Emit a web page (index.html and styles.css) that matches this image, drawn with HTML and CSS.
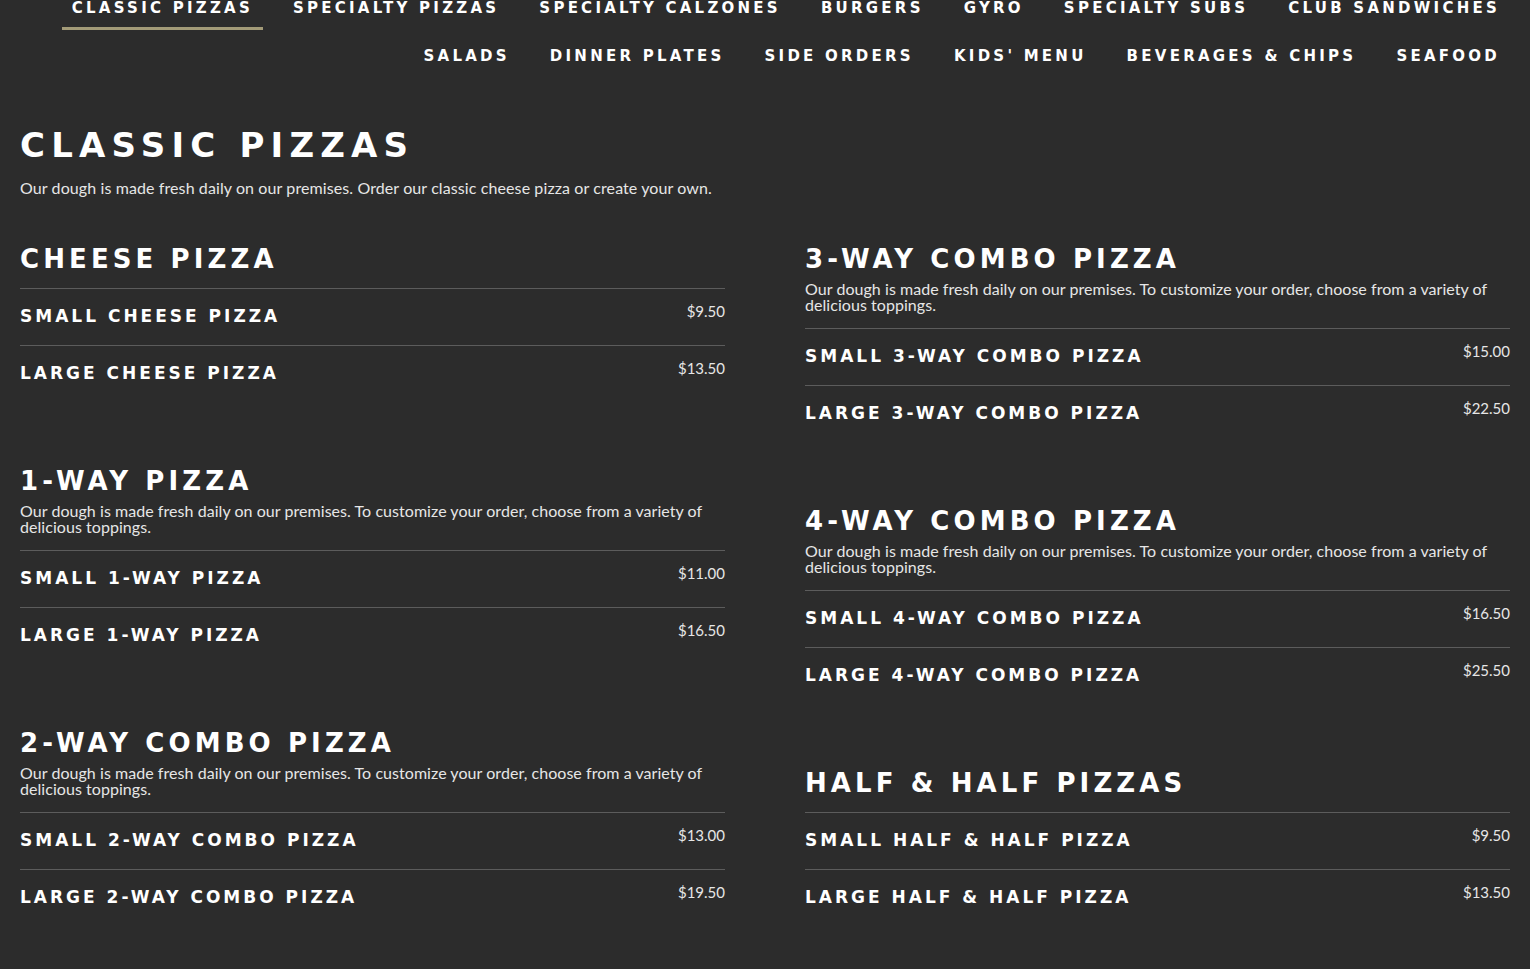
FILE: index.html
```html
<!DOCTYPE html>
<html lang="en">
<head>
<meta charset="utf-8">
<title>Classic Pizzas</title>
<link rel="stylesheet" href="styles.css">
</head>
<body>
<nav class="nav">
  <ul class="nav-row">
    <li class="nav-item active">Classic Pizzas</li>
    <li class="nav-item">Specialty Pizzas</li>
    <li class="nav-item">Specialty Calzones</li>
    <li class="nav-item">Burgers</li>
    <li class="nav-item">Gyro</li>
    <li class="nav-item">Specialty Subs</li>
    <li class="nav-item">Club Sandwiches</li>
  </ul>
  <ul class="nav-row">
    <li class="nav-item">Salads</li>
    <li class="nav-item">Dinner Plates</li>
    <li class="nav-item">Side Orders</li>
    <li class="nav-item">Kids' Menu</li>
    <li class="nav-item">Beverages &amp; Chips</li>
    <li class="nav-item">Seafood</li>
  </ul>
</nav>

<main class="menu">
  <h1 class="menu-title">Classic Pizzas</h1>
  <p class="menu-intro">Our dough is made fresh daily on our premises. Order our classic cheese pizza or create your own.</p>

  <div class="columns">
    <div class="column">
      <section class="section">
        <h2 class="section-title">Cheese Pizza</h2>
        <ul class="items">
          <li class="item"><span class="item-name">Small Cheese Pizza</span><span class="price">$9.50</span></li>
          <li class="item"><span class="item-name">Large Cheese Pizza</span><span class="price">$13.50</span></li>
        </ul>
      </section>
      <section class="section">
        <h2 class="section-title">1-Way Pizza</h2>
        <p class="section-desc">Our dough is made fresh daily on our premises. To customize your order, choose from a variety of delicious toppings.</p>
        <ul class="items">
          <li class="item"><span class="item-name">Small 1-Way Pizza</span><span class="price">$11.00</span></li>
          <li class="item"><span class="item-name">Large 1-Way Pizza</span><span class="price">$16.50</span></li>
        </ul>
      </section>
      <section class="section">
        <h2 class="section-title">2-Way Combo Pizza</h2>
        <p class="section-desc">Our dough is made fresh daily on our premises. To customize your order, choose from a variety of delicious toppings.</p>
        <ul class="items">
          <li class="item"><span class="item-name">Small 2-Way Combo Pizza</span><span class="price">$13.00</span></li>
          <li class="item"><span class="item-name">Large 2-Way Combo Pizza</span><span class="price">$19.50</span></li>
        </ul>
      </section>
    </div>
    <div class="column">
      <section class="section">
        <h2 class="section-title">3-Way Combo Pizza</h2>
        <p class="section-desc">Our dough is made fresh daily on our premises. To customize your order, choose from a variety of delicious toppings.</p>
        <ul class="items">
          <li class="item"><span class="item-name">Small 3-Way Combo Pizza</span><span class="price">$15.00</span></li>
          <li class="item"><span class="item-name">Large 3-Way Combo Pizza</span><span class="price">$22.50</span></li>
        </ul>
      </section>
      <section class="section">
        <h2 class="section-title">4-Way Combo Pizza</h2>
        <p class="section-desc">Our dough is made fresh daily on our premises. To customize your order, choose from a variety of delicious toppings.</p>
        <ul class="items">
          <li class="item"><span class="item-name">Small 4-Way Combo Pizza</span><span class="price">$16.50</span></li>
          <li class="item"><span class="item-name">Large 4-Way Combo Pizza</span><span class="price">$25.50</span></li>
        </ul>
      </section>
      <section class="section">
        <h2 class="section-title">Half &amp; Half Pizzas</h2>
        <ul class="items">
          <li class="item"><span class="item-name">Small Half &amp; Half Pizza</span><span class="price">$9.50</span></li>
          <li class="item"><span class="item-name">Large Half &amp; Half Pizza</span><span class="price">$13.50</span></li>
        </ul>
      </section>
    </div>
  </div>
</main>
</body>
</html>
```

FILE: styles.css
```css
* {
  box-sizing: border-box;
}

html, body {
  margin: 0;
  padding: 0;
  background: #2c2c2c;
  color: #ffffff;
}

body {
  font-family: "Lato", "Liberation Sans", sans-serif;
  min-height: 969px;
  overflow: hidden;
}

/* ---------- Navigation ---------- */
.nav {
  display: flex;
  flex-direction: column;
  row-gap: 18px;
  padding: 0 20px 0 20px;
}

.nav-row {
  list-style: none;
  margin: 0;
  padding: 0;
  display: flex;
  justify-content: flex-end;
  column-gap: 20px;
}

.nav-item {
  font-family: "DejaVu Sans", sans-serif;
  font-weight: 700;
  font-size: 15px;
  line-height: 16px;
  letter-spacing: 3.25px;
  text-transform: uppercase;
  color: #ffffff;
  padding: 0 10px 11px 10px;
  border-bottom: 3px solid transparent;
  white-space: nowrap;
}

.nav-item.active {
  border-bottom-color: #a39b78;
}

/* ---------- Menu ---------- */
.menu {
  padding: 0 20px;
}

.menu-title {
  font-family: "DejaVu Sans", sans-serif;
  font-weight: 700;
  font-size: 34px;
  line-height: 40px;
  letter-spacing: 6.2px;
  text-transform: uppercase;
  margin: 47px 0 0 0;
}

.menu-intro {
  font-size: 16px;
  line-height: 16px;
  letter-spacing: 0.1px;
  color: #e6e6e6;
  margin: 15px 0 0 0;
}

.columns {
  display: grid;
  grid-template-columns: 1fr 1fr;
  column-gap: 80px;
  margin-top: 46px;
}

.column {
  display: flex;
  flex-direction: column;
  row-gap: 62px;
}

.section-title {
  font-family: "DejaVu Sans", sans-serif;
  font-weight: 700;
  font-size: 26px;
  line-height: 34px;
  letter-spacing: 4.1px;
  text-transform: uppercase;
  margin: 0 0 5px 0;
}

.section-desc {
  font-size: 16px;
  line-height: 16px;
  letter-spacing: 0.05px;
  color: #e6e6e6;
  margin: 0 0 15px 0;
}

.items {
  list-style: none;
  margin: 12px 0 0 0;
  padding: 0;
}

.item {
  display: flex;
  justify-content: space-between;
  align-items: flex-start;
  height: 57px;
  border-top: 1px solid #5c5c5c;
  padding-top: 17px;
}

.item-name {
  font-family: "DejaVu Sans", sans-serif;
  font-weight: 700;
  font-size: 17px;
  line-height: 20px;
  letter-spacing: 3px;
  text-transform: uppercase;
}

.price {
  font-size: 15px;
  line-height: 20px;
  color: #e6e6e6;
  margin-top: -5px;
}
```
